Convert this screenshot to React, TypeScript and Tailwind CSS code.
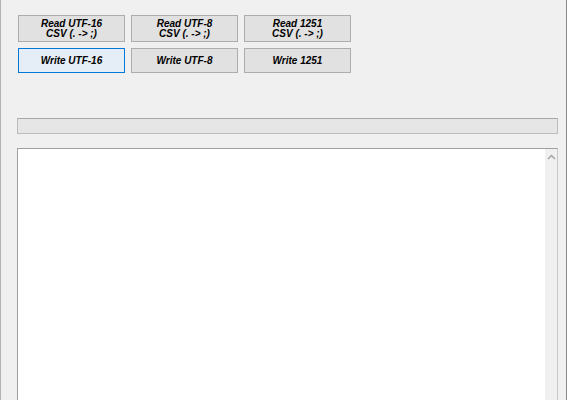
import React from "react";

const btn =
  "flex flex-col items-center justify-center border border-[#adadad] bg-[#e1e1e1] text-[10px] leading-[10px] font-bold italic text-black";

export default function App() {
  return (
    <div
      className="relative w-[567px] h-[400px] overflow-hidden bg-[#f0f0f0] border-l border-l-[#b4b4b4] border-r border-r-[#8a8a8a]"
      style={{ fontFamily: '"Liberation Sans", Arial, sans-serif' }}
    >
      <div className="flex flex-col pl-[16px] pr-[8px] pt-[15px]">
        {/* button grid */}
        <div className="ml-[1px] grid grid-cols-[107px_107px_107px] gap-x-[6px] gap-y-[6px]">
          <div className={`${btn} h-[27px]`}>
            <span>Read UTF-16</span>
            <span>CSV (. -&gt; ;)</span>
          </div>
          <div className={`${btn} h-[27px]`}>
            <span>Read UTF-8</span>
            <span>CSV (. -&gt; ;)</span>
          </div>
          <div className={`${btn} h-[27px]`}>
            <span>Read 1251</span>
            <span>CSV (. -&gt; ;)</span>
          </div>
          <div className={`${btn} h-[25px] !border-[#0078d7] !bg-[#e5edf6]`}>
            <span>Write UTF-16</span>
          </div>
          <div className={`${btn} h-[25px]`}>
            <span>Write UTF-8</span>
          </div>
          <div className={`${btn} h-[25px]`}>
            <span>Write 1251</span>
          </div>
        </div>

        {/* progress bar */}
        <div className="mt-[45px] h-[16px] w-[541px] border border-[#bcbcbc] border-t-[#a8a8a8] bg-[#e6e6e6]" />

        {/* multiline text box */}
        <div className="mt-[14px] flex h-[260px] w-[541px] border border-[#a0a0a0] border-r-[#c8c8c8] bg-white">
          <div className="flex-1" />
          <div className="flex w-[12px] flex-col items-center bg-[#f0f0f0]">
            <svg width="9" height="6" viewBox="0 0 9 6" className="mt-[5px]">
              <path d="M1 5 L4.5 1.5 L8 5" fill="none" stroke="#a3a3a3" strokeWidth="1.5" />
            </svg>
          </div>
        </div>
      </div>
    </div>
  );
}
